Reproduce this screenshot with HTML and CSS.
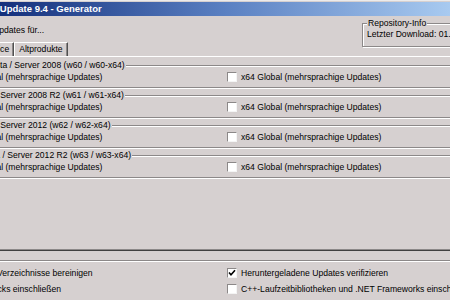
FILE: index.html
```html
<!DOCTYPE html>
<html lang="de">
<head>
<meta charset="utf-8">
<title>WSUS Offline Update 9.4 - Generator</title>
<link rel="stylesheet" href="styles.css">
</head>
<body>
<div class="win">
  <div class="titlebar">WSUS Offline Update 9.4 - Generator</div>
  <div class="header">
    <div class="head-left">
      <div class="caption">Updates für...</div>
      <div class="tabs">
        <div class="tab tab-active">Windows</div>
        <div class="tab">Office</div>
        <div class="tab">Altprodukte</div>
      </div>
    </div>
    <fieldset class="repo">
      <legend>Repository-Info</legend>
      <div class="repo-line">Letzter Download: 01.03.2015 - 10:24</div>
    </fieldset>
  </div>

  <div class="panel">
    <fieldset class="group">
      <legend>Windows Vista / Server 2008 (w60 / w60-x64)</legend>
      <div class="cols">
        <label class="cb"><span class="box"></span>x86 Global (mehrsprachige Updates)</label>
        <label class="cb"><span class="box"></span>x64 Global (mehrsprachige Updates)</label>
      </div>
    </fieldset>
    <fieldset class="group">
      <legend>Windows 7 / Server 2008 R2 (w61 / w61-x64)</legend>
      <div class="cols">
        <label class="cb"><span class="box"></span>x86 Global (mehrsprachige Updates)</label>
        <label class="cb"><span class="box"></span>x64 Global (mehrsprachige Updates)</label>
      </div>
    </fieldset>
    <fieldset class="group">
      <legend>Windows 8 / Server 2012 (w62 / w62-x64)</legend>
      <div class="cols">
        <label class="cb"><span class="box"></span>x86 Global (mehrsprachige Updates)</label>
        <label class="cb"><span class="box"></span>x64 Global (mehrsprachige Updates)</label>
      </div>
    </fieldset>
    <fieldset class="group">
      <legend>Windows 8.1 / Server 2012 R2 (w63 / w63-x64)</legend>
      <div class="cols">
        <label class="cb"><span class="box"></span>x86 Global (mehrsprachige Updates)</label>
        <label class="cb"><span class="box"></span>x64 Global (mehrsprachige Updates)</label>
      </div>
    </fieldset>
  </div>

  <div class="options">
    <div class="cols opt-cols">
      <label class="cb"><span class="box"></span>Download-Verzeichnisse bereinigen</label>
      <label class="cb"><span class="box checked"><svg viewBox="0 0 8 8" width="8" height="8"><path d="M1 3.5 L3 5.8 L7 1.2" fill="none" stroke="#000" stroke-width="1.6"/></svg></span>Heruntergeladene Updates verifizieren</label>
      <label class="cb"><span class="box"></span>Service Packs einschließen</label>
      <label class="cb"><span class="box"></span>C++-Laufzeitbibliotheken und .NET Frameworks einschließen</label>
      <label class="cb"><span class="box"></span>Dynamische Updates einschließen</label>
      <label class="cb"><span class="box"></span>WSUS-Offline-Scan einschließen</label>
    </div>
  </div>
</div>
</body>
</html>
```

FILE: styles.css
```css
html, body {
  margin: 0;
  padding: 0;
}
body {
  width: 450px;
  height: 300px;
  overflow: hidden;
  background: #d6d0d0;
  font-family: "Liberation Sans", Arial, sans-serif;
  font-size: 8.6px;
  color: #000;
}
.win {
  margin-left: -70px;
  width: 900px;
  border-top: 1px solid #ecebeb;
  padding-top: 1px;
}
.titlebar {
  height: 14px;
  line-height: 14px;
  padding-left: 6px;
  font-size: 9.5px;
  font-weight: bold;
  color: #fff;
  white-space: nowrap;
  background: linear-gradient(90deg, #0a246a 0px, #14307c 70px, #5a80c2 295px, #a8caf0 520px, #b0d0f4 900px);
}
.header {
  display: grid;
  grid-template-columns: 432px 1fr;
  align-items: start;
}
.head-left {
  display: flex;
  flex-direction: column;
}
.caption {
  margin-top: 9px;
  margin-left: 63px;
  line-height: 10px;
  white-space: nowrap;
}
.tabs {
  display: flex;
  margin-top: 7px;
  margin-left: 3px;
}
.tab {
  height: 13px;
  line-height: 13px;
  padding: 0 4px;
  border-top: 1px solid #fff;
  border-left: 1px solid #fff;
  border-right: 1px solid #505050;
  box-shadow: inset -1px 0 0 #8c8888;
  white-space: nowrap;
}
.tab-active {
  padding: 0 6px;
}
.repo {
  margin: 2px 0 0 0;
  padding: 1px 0 7px 4px;
  border: 1px solid #8c8888;
  box-shadow: 1px 1px 0 #fff, inset 1px 1px 0 #fff;
  min-width: 0;
}
.repo legend,
.group legend {
  padding: 0 1px;
  line-height: 10px;
  background: #d6d0d0;
  white-space: nowrap;
}
.repo-line {
  line-height: 10px;
  white-space: nowrap;
}
.panel {
  box-sizing: border-box;
  height: 195px;
  margin-left: 4px;
  padding: 3px 0 0 8px;
  border-top: 1px solid #fff;
  border-left: 1px solid #fff;
  border-bottom: 1px solid #404040;
  box-shadow: inset 0 -1px 0 #8c8888;
}
.group {
  margin: 0 0 2px 0;
  padding: 0 0 4px 4px;
  border: 1px solid #8c8888;
  box-shadow: 1px 1px 0 #fff, inset 1px 1px 0 #fff;
  min-width: 0;
}
.group legend {
  margin-left: 2px;
}
.cols {
  display: grid;
  grid-template-columns: 279px 279px;
  grid-auto-rows: 13px;
  align-items: center;
}
.cb {
  display: flex;
  align-items: center;
  white-space: nowrap;
}
.box {
  box-sizing: border-box;
  width: 10px;
  height: 10px;
  margin-right: 4px;
  background: #fff;
  border: 1px solid;
  border-color: #8c8888 #f4f4f4 #f4f4f4 #8c8888;
  display: flex;
  align-items: center;
  justify-content: center;
  flex: none;
}
.options {
  margin: 9px 0 0 13px;
  padding: 5px 0 0 5px;
  border-top: 1px solid #8c8888;
  box-shadow: inset 0 1px 0 #fff;
}
.opt-cols {
  margin-left: -6px;
  grid-template-columns: 285px 279px;
  row-gap: 3px;
}
```
